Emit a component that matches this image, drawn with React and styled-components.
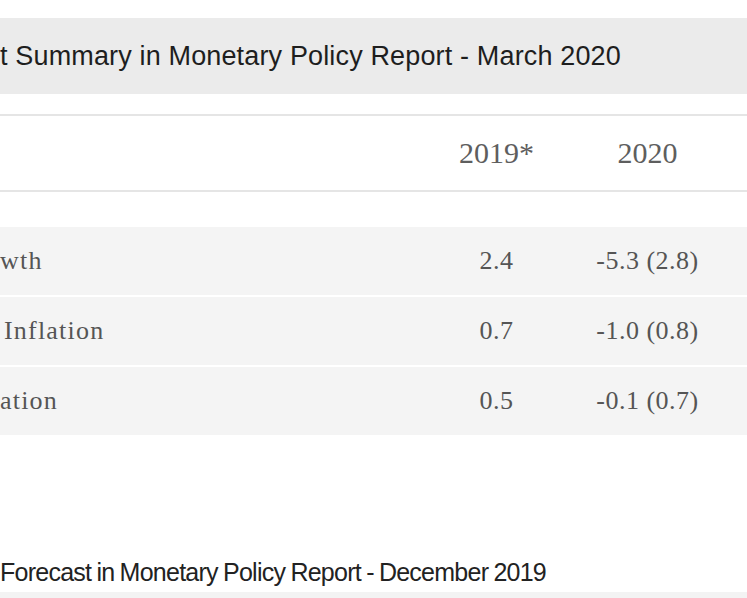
import React from 'react'
import styled, { createGlobalStyle } from 'styled-components'

const GlobalStyle = createGlobalStyle`
    html, body {
        margin: 0;
        padding: 0;
        background: #ffffff;
    }
`;

const Page = styled.div`
    width: 747px;
    height: 598px;
    overflow: hidden;
    display: flex;
    flex-direction: column;
    background: #ffffff;
`;

const TitleBar = styled.div`
    margin-top: 18px;
    height: 76px;
    background: #ebebeb;
    display: flex;
    align-items: center;
    font-family: "Liberation Sans", Arial, sans-serif;
    font-size: 27px;
    letter-spacing: 0.15px;
    color: #1e1e1e;
    white-space: nowrap;
`;

const HeadRow = styled.div`
    margin-top: 20px;
    height: 74px;
    border-top: 2px solid #e5e5e5;
    border-bottom: 2px solid #e5e5e5;
    display: grid;
    grid-template-columns: 421px 151px 151px 1fr;
    align-items: center;
    font-family: "Liberation Serif", "Times New Roman", serif;
    font-size: 30px;
    color: #5e5e5e;
`;

const Body = styled.div`
    margin-top: 35px;
    display: flex;
    flex-direction: column;
    gap: 2px;
`;

const Row = styled.div`
    height: 68px;
    background: #f4f4f4;
    display: grid;
    grid-template-columns: 421px 151px 151px 1fr;
    align-items: center;
    font-family: "Liberation Serif", "Times New Roman", serif;
    font-size: 26px;
    letter-spacing: 0.5px;
    color: #555555;
`;

const Label = styled.div`
    padding-left: ${p => p.$indent || 0}px;
    letter-spacing: 1.2px;
    white-space: nowrap;
`;

const Cell = styled.div`
    text-align: center;
    white-space: nowrap;
`;

const SubTitle = styled.div`
    margin-top: 117px;
    height: 40px;
    display: flex;
    align-items: center;
    font-family: "Liberation Sans", Arial, sans-serif;
    font-size: 25px;
    letter-spacing: -0.75px;
    word-spacing: -1px;
    color: #222222;
    white-space: nowrap;
`;

const NextBand = styled.div`
    flex: 1;
    background: #f3f3f3;
`;

const rows = [
    { label: 'wth', indent: 0, y2019: '2.4', y2020: '-5.3 (2.8)' },
    { label: 'Inflation', indent: 4, y2019: '0.7', y2020: '-1.0 (0.8)' },
    { label: 'ation', indent: 0, y2019: '0.5', y2020: '-0.1 (0.7)' },
];

const App = () => {
  return (
    <Page>
        <GlobalStyle />
        <TitleBar>t Summary in Monetary Policy Report - March 2020</TitleBar>
        <HeadRow>
            <div />
            <Cell>2019*</Cell>
            <Cell>2020</Cell>
            <div />
        </HeadRow>
        <Body>
            {rows.map(r => (
                <Row key={r.y2020}>
                    <Label $indent={r.indent}>{r.label}</Label>
                    <Cell>{r.y2019}</Cell>
                    <Cell>{r.y2020}</Cell>
                    <div />
                </Row>
            ))}
        </Body>
        <SubTitle>Forecast in Monetary Policy Report - December 2019</SubTitle>
        <NextBand />
    </Page>
  )
}

export default App
